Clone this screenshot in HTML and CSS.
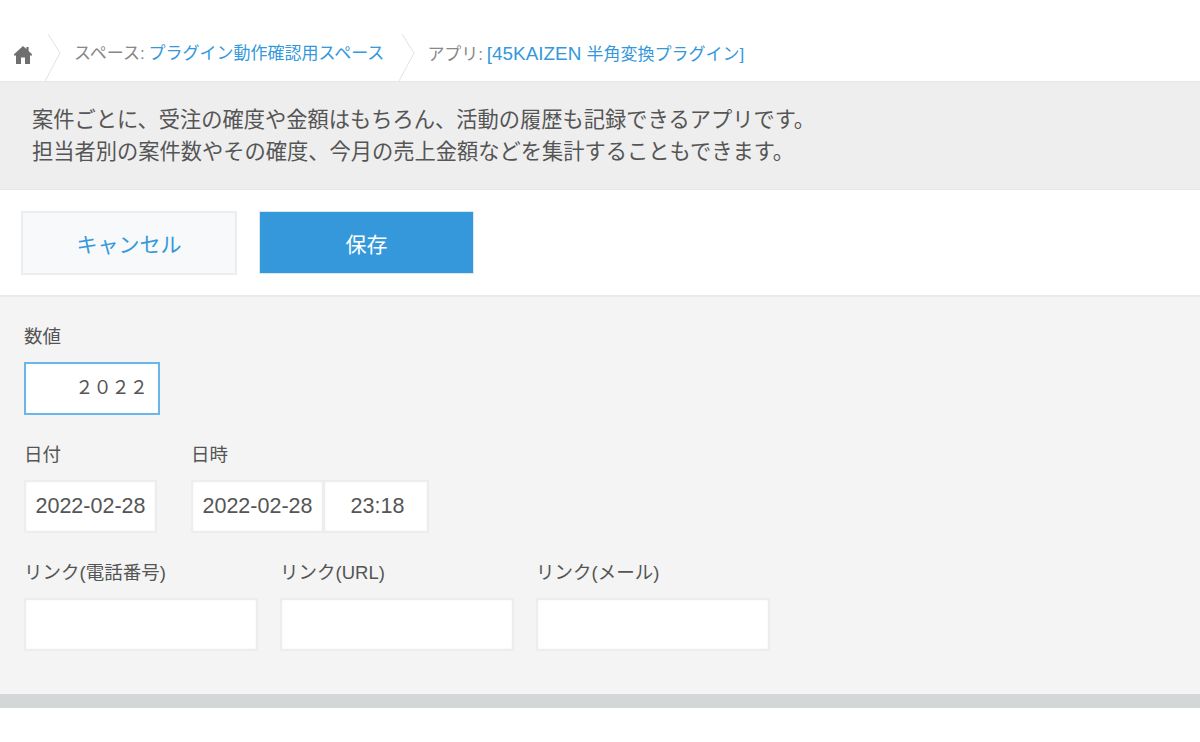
FILE: index.html
```html
<!DOCTYPE html>
<html lang="ja">
<head>
<meta charset="utf-8">
<title>45KAIZEN 半角変換プラグイン</title>
<link rel="stylesheet" href="styles.css">
</head>
<body>
<nav class="crumbs">
  <svg class="home" viewBox="0 0 18 18" aria-hidden="true"><path d="M9 0 L12.4 3 V1 H14.6 V5 L18 8.2 V9.4 H16 V18 H11 V11.5 H7 V18 H2 V9.4 H0 V8.2 Z"/></svg>
  <svg class="sep" viewBox="0 0 18 48" aria-hidden="true"><path d="M3 0 L15 19 L0 47"/></svg>
  <span class="crumb">スペース: <a>プラグイン動作確認用スペース</a></span>
  <svg class="sep" viewBox="0 0 18 48" aria-hidden="true"><path d="M3 0 L15 19 L0 47"/></svg>
  <span class="crumb">アプリ: <a><span class="latin">[45KAIZEN </span>半角変換プラグイン]</a></span>
</nav>
<section class="desc">
  <p>案件ごとに、受注の確度や金額はもちろん、活動の履歴も記録できるアプリです。</p>
  <p>担当者別の案件数やその確度、今月の売上金額などを集計することもできます。</p>
</section>
<div class="toolbar">
  <button class="btn cancel">キャンセル</button>
  <button class="btn save">保存</button>
</div>
<main class="form">
  <div class="row row-num">
    <div class="field">
      <div class="label">数値</div>
      <div class="input num">２０２２</div>
    </div>
  </div>
  <div class="row row-date">
    <div class="field">
      <div class="label">日付</div>
      <div class="input date">2022-02-28</div>
    </div>
    <div class="field">
      <div class="label">日時</div>
      <div class="pair">
        <div class="input date">2022-02-28</div>
        <div class="input time">23:18</div>
      </div>
    </div>
  </div>
  <div class="row row-link">
    <div class="field">
      <div class="label">リンク(電話番号)</div>
      <div class="input link"></div>
    </div>
    <div class="field">
      <div class="label">リンク(URL)</div>
      <div class="input link"></div>
    </div>
    <div class="field">
      <div class="label">リンク(メール)</div>
      <div class="input link"></div>
    </div>
  </div>
</main>
<div class="footbar"></div>
</body>
</html>
```
FILE: styles.css
```css
* { box-sizing: border-box; }
html, body { margin: 0; padding: 0; background: #fff; }
body {
  height: 742px;
  overflow: hidden;
  font-family: "Liberation Sans", "Noto Sans CJK JP", sans-serif;
  color: #555;
}
.crumbs {
  height: 82px;
  border-bottom: 1px solid #e6e8e8;
  display: flex;
  align-items: flex-start;
  padding: 34px 0 0 14px;
}
.home { width: 18px; height: 18px; margin-top: 12px; fill: #6f6f6f; flex: none; }
.sep { width: 18px; height: 48px; fill: none; stroke: #dde4e4; stroke-width: 1; flex: none; }
.sep:nth-of-type(2) { margin-left: 13px; margin-right: 11px; }
.sep:nth-of-type(3) { margin-left: 15px; margin-right: 10px; }
.crumb { font-size: 17px; line-height: 24px; margin-top: 8px; color: #888; white-space: nowrap; word-spacing: -1px; }
.crumb a { color: #3498db; word-spacing: 0; }
.latin { font-size: 18.9px; }
.desc {
  height: 108px;
  background: #eee;
  border-bottom: 1px solid #e6e8e8;
  padding: 22px 32px 0;
  font-size: 21.25px;
  line-height: 32px;
  color: #555;
}
.desc p { margin: 0; white-space: nowrap; }
.toolbar {
  height: 107px;
  border-bottom: 2px solid #e8ebeb;
  display: flex;
  align-items: center;
  gap: 22px;
  padding: 1px 0 0 21px;
}
.btn {
  width: 216px;
  height: 64px;
  font-family: inherit;
  font-size: 21px;
  padding: 0;
  border-radius: 0;
}
.cancel { background: #f7f9fa; border: 2px solid #ebeeef; color: #3498db; }
.save { width: 215px; height: 63px; margin-bottom: 1px; background: #3498db; border: 1px solid #d8e8f3; color: #fff; }
.form {
  height: 397px;
  background: #f4f4f4;
  padding: 27px 24px 0;
}
.row { display: flex; }
.row-num { height: 118px; }
.row-date { height: 118px; gap: 34px; }
.row-link { gap: 22px; }
.label { font-size: 18.5px; line-height: 26px; height: 38px; color: #555; white-space: nowrap; }
.input {
  height: 53px;
  background: #fff;
  border: 2px solid #eceeee;
  box-shadow: inset 0 0 3px rgba(0, 0, 0, .05);
  font-size: 21.5px;
  line-height: 49px;
  color: #555;
  text-align: center;
  white-space: nowrap;
}
.num {
  width: 136px;
  border: 2px solid #6ab6ea;
  font-size: 18.2px;
  text-align: right;
  padding-right: 10px;
}
.date { width: 133px; }
.time { width: 105px; border-left-width: 1px; padding-left: 3px; }
.pair { display: flex; }
.link { width: 234px; }
.footbar { height: 14px; background: #d3d7d7; }
```
